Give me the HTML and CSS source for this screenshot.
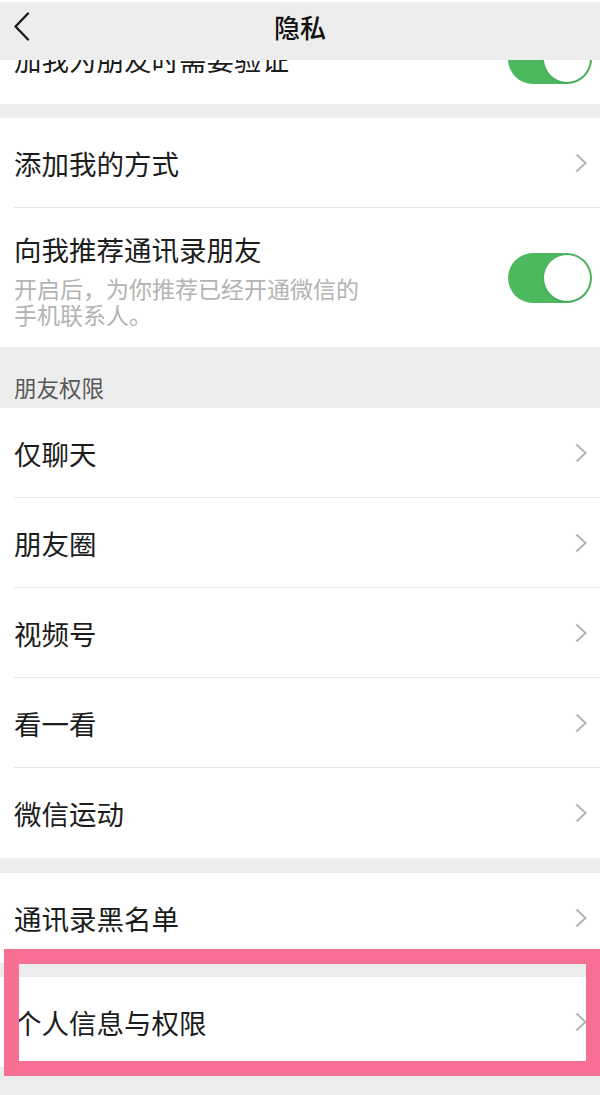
FILE: index.html
```html
<!DOCTYPE html>
<html lang="zh-CN">
<head>
    <meta charset="UTF-8">
    <meta name="viewport" content="width=device-width, initial-scale=1.0">
    <title>隐私</title>
    <link rel="stylesheet" href="styles.css">
</head>
<body>
    <div class="page">
        <div class="nav-bar">
            <a class="nav-back" href="#">
                <svg width="17" height="29" viewBox="0 0 17 29"><path d="M15 1.5 L2.5 14.5 L15 27.5" fill="none" stroke="#1a1a1a" stroke-width="2.4" stroke-linecap="round" stroke-linejoin="round"/></svg>
            </a>
            <div class="nav-title">隐私</div>
        </div>

        <!-- row scrolled half under the nav bar -->
        <div class="cell-clip">
            <div class="cell cell-scrolled">
                <div class="cell-title">加我为朋友时需要验证</div>
                <div class="switch on"><span class="knob"></span></div>
            </div>
        </div>

        <div class="group-gap"></div>

        <div class="group">
            <div class="cell">
                <div class="cell-title">添加我的方式</div>
                <span class="arrow"></span>
            </div>
            <div class="cell cell-tall">
                <div class="cell-body">
                    <div class="cell-title">向我推荐通讯录朋友</div>
                    <div class="cell-desc">开启后，为你推荐已经开通微信的手机联系人。</div>
                </div>
                <div class="switch on"><span class="knob"></span></div>
            </div>
        </div>

        <div class="group-header">朋友权限</div>

        <div class="group">
            <div class="cell"><div class="cell-title">仅聊天</div><span class="arrow"></span></div>
            <div class="cell"><div class="cell-title">朋友圈</div><span class="arrow"></span></div>
            <div class="cell"><div class="cell-title">视频号</div><span class="arrow"></span></div>
            <div class="cell"><div class="cell-title">看一看</div><span class="arrow"></span></div>
            <div class="cell"><div class="cell-title">微信运动</div><span class="arrow"></span></div>
        </div>

        <div class="group-gap wide"></div>

        <div class="group">
            <div class="cell"><div class="cell-title">通讯录黑名单</div><span class="arrow"></span></div>
        </div>

        <div class="group-gap"></div>

        <div class="group">
            <div class="cell"><div class="cell-title">个人信息与权限</div><span class="arrow"></span></div>
        </div>

        <!-- highlight frame drawn over the screenshot -->
        <div class="highlight"></div>
    </div>
</body>
</html>
```

FILE: styles.css
```css
* {
    margin: 0;
    padding: 0;
    box-sizing: border-box;
}

body {
    font-family: "Noto Sans CJK SC", "Noto Sans", sans-serif;
    background: #ededed;
    color: #1c1c1c;
    width: 600px;
    height: 1095px;
    overflow: hidden;
}

.page {
    position: relative;
    min-height: 1095px;
    border-top: 2px solid #fff;
}

.nav-bar {
    height: 58px;
    background: #ededed;
    display: flex;
    align-items: flex-start;
    justify-content: center;
    position: relative;
    z-index: 2;
}

.nav-back {
    position: absolute;
    left: 13px;
    top: 10px;
    display: block;
    line-height: 0;
}

.nav-title {
    font-size: 26px;
    font-weight: 500;
    line-height: 50px;
    color: #111;
}

.cell-clip {
    height: 44px;
    overflow: hidden;
    background: #fff;
}

.cell-scrolled {
    margin-top: -46px;
    border-bottom: none;
}

.group {
    background: #fff;
}

.group-gap {
    height: 14px;
}

.group-gap.wide {
    height: 15px;
}

.group-header {
    height: 61px;
    display: flex;
    align-items: flex-end;
    padding: 0 14px 6px;
    font-size: 22.5px;
    line-height: 30px;
    color: #595959;
}

.cell {
    height: 90px;
    display: flex;
    align-items: center;
    justify-content: space-between;
    padding: 0 13px 0 14px;
    position: relative;
}

.cell + .cell::before {
    content: "";
    position: absolute;
    left: 14px;
    right: 0;
    top: -1px;
    height: 1px;
    background: #e6e6e6;
}

.cell-tall {
    height: 139px;
    align-items: center;
}

.cell-title {
    font-size: 27.5px;
    line-height: 40px;
    white-space: nowrap;
}

.cell-desc {
    margin-top: 6px;
    max-width: 350px;
    font-size: 23px;
    line-height: 26px;
    color: #b3b3b3;
}

.arrow {
    width: 12px;
    height: 20px;
    background: no-repeat center / 12px 20px url("data:image/svg+xml,%3Csvg xmlns='http://www.w3.org/2000/svg' width='12' height='20' viewBox='0 0 12 20'%3E%3Cpath d='M1.5 1.5 L10.5 10 L1.5 18.5' fill='none' stroke='%23b4b4b4' stroke-width='2'/%3E%3C/svg%3E");
}

.switch {
    width: 84px;
    height: 50px;
    border-radius: 25px;
    background: #e5e5e5;
    margin-right: -5px;
    position: relative;
    flex-shrink: 0;
}

.switch.on {
    background: #4cb95f;
}

.knob {
    position: absolute;
    top: 2px;
    left: 2px;
    width: 46px;
    height: 46px;
    border-radius: 50%;
    background: #fff;
    box-shadow: 0 1px 3px rgba(0, 0, 0, 0.15);
}

.switch.on .knob {
    left: 36px;
}

.highlight {
    position: absolute;
    left: 4px;
    right: 0;
    top: 947px;
    height: 127px;
    border: 15px solid #f76f92;
    border-right-width: 14px;
    pointer-events: none;
}
```
